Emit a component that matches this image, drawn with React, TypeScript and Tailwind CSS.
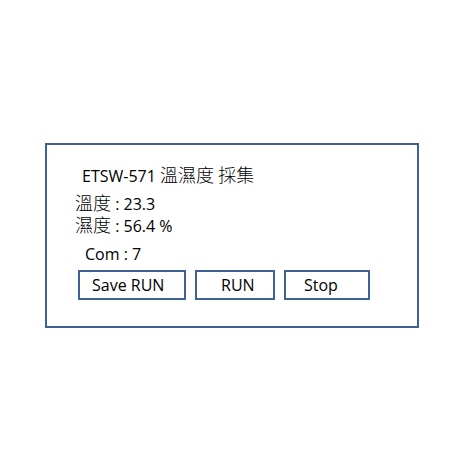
// ETSW-571 溫濕度採集 panel
const font = {
  fontFamily: '"Open Sans", "Noto Sans CJK TC", sans-serif',
};

function Cjk({ children }: { children: string }) {
  return <span className="text-[18px] font-light leading-none">{children}</span>;
}

export default function App() {
  return (
    <div className="h-[460px] w-[460px] bg-white pt-[143px] pl-[45px]" style={font}>
      <div className="flex h-[185px] w-[374px] flex-col border-2 border-[#3e6297] bg-white text-black">
        <div className="pt-[20px] pl-[35px] text-[16px] leading-[22px]">
          ETSW-571 <Cjk>溫濕度</Cjk> <Cjk>採集</Cjk>
        </div>
        <div className="mt-[6px] pl-[28px] text-[16px] leading-[22px]">
          <div>
            <Cjk>溫度</Cjk> : 23.3
          </div>
          <div>
            <Cjk>濕度</Cjk> : 56.4 %
          </div>
        </div>
        <div className="mt-[6px] pl-[38px] text-[16px] leading-[22px]">Com : 7</div>
        <div className="mt-[5px] flex gap-[9px] pl-[31px]">
          <button className="h-[30px] w-[108px] border-2 border-[#3e6297] bg-white pl-[12px] text-left text-[16px] leading-none">
            Save RUN
          </button>
          <button className="h-[30px] w-[80px] border-2 border-[#3e6297] bg-white pl-[24px] text-left text-[16px] leading-none">
            RUN
          </button>
          <button className="h-[30px] w-[86px] border-2 border-[#3e6297] bg-white pl-[18px] text-left text-[16px] leading-none">
            Stop
          </button>
        </div>
      </div>
    </div>
  );
}
